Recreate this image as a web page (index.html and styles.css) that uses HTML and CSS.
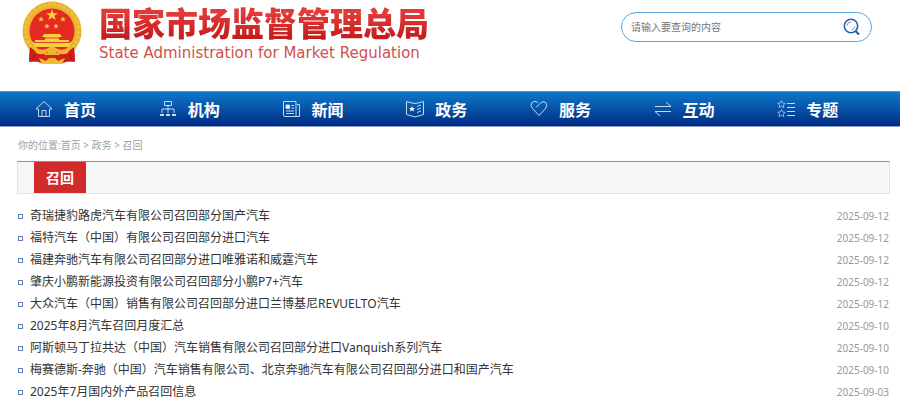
FILE: index.html
```html
<!DOCTYPE html>
<html lang="zh-CN">
<head>
    <meta charset="UTF-8">
    <meta name="viewport" content="width=device-width, initial-scale=1.0">
    <title>召回</title>
    <link rel="stylesheet" href="styles.css">
</head>
<body>

<header class="header">
    <div class="brand">
        <svg class="emblem" viewBox="0 0 60 64" aria-hidden="true">
            <path d="M8 45 L7 61 L16 60 L22 63 H39 L45 60 L53 61 L52 45 Z" fill="#cf1f1b"/>
            <circle cx="30" cy="30" r="29.5" fill="#e9b32c"/>
            <circle cx="30" cy="30" r="26.5" fill="none" stroke="#f0c040" stroke-width="3" stroke-dasharray="3 2"/>
            <circle cx="30" cy="30" r="22.5" fill="#e42a22"/>
            <g fill="#f8cf3c">
                <path d="M30 8 L31.500 12.200 H36 L32.400 14.800 L33.700 19 L30 16.400 L26.300 19 L27.600 14.800 L24 12.200 H28.500 Z"/>
                <path id="star" d="M19 15.500 L19.800 17.300 L21.800 17.400 L20.200 18.600 L20.800 20.500 L19 19.400 L17.200 20.500 L17.800 18.600 L16.200 17.400 L18.200 17.300 Z"/>
                <use href="#star" x="22"/>
                <use href="#star" x="6" y="7"/>
                <use href="#star" x="15" y="7"/>
                <path d="M22 33 H38 L40 36 H37 V39 H47 V41 H50 L47 46 H13 L10 41 H13 V39 H23 V36 H20 Z"/>
            </g>
            <path d="M12 41.500 H48 M22 37 H38" stroke="#d8452a" fill="none"/>
            <path d="M8 46 Q16 53 23 53 L17 61 L7 60 Z M52 46 Q44 53 37 53 L43 61 L53 60 Z" fill="#ce1d1a"/>
            <path d="M11 46 Q21 51 26 47 Q30 44 34 47 Q39 51 49 46 L46 52 Q39 55 35 51 Q30 57 25 51 Q21 55 14 52 Z" fill="#efb62e"/>
            <path d="M20 54 H40 L44 61 L38 63 H22 L16 61 Z" fill="#d3251d"/>
            <path d="M17 57 L24 60 L27 57 H33 L36 60 L43 57 L40 63 H20 Z" fill="#f3bd33"/>
            <path d="M13 53 L10 59 M47 53 L50 59" stroke="#9f1513" fill="none"/>
        </svg>
        <div class="brand-text">
            <h1 class="brand-name">国家市场监督管理总局</h1>
            <p class="brand-en">State Administration for Market Regulation</p>
        </div>
    </div>
    <form class="search" role="search">
        <input class="search-input" type="text" placeholder="请输入要查询的内容" aria-label="请输入要查询的内容">
        <button class="search-btn" type="submit" aria-label="搜索">
            <svg viewBox="0 0 18 18" fill="none" stroke="#2c5da8">
                <circle cx="8" cy="8" r="6.700" stroke-width="1.600"/>
                <path d="M4 8 A4 4 0 0 1 8 4 M8.500 12 A4 4 0 0 0 12 8" stroke-width="1" stroke="#7d9fd0"/>
                <path d="M12.500 13 L16 16.500" stroke-width="2.200"/>
            </svg>
        </button>
    </form>
</header>

<nav class="nav">
    <a class="nav-item" href="#">
        <svg class="nav-icon" viewBox="0 0 18 18"><path d="M1 9 L9 1.500 L17 9 H14.500 V16.500 H3.500 V9 Z M7 16.500 V10.500 H11 V16.500"/></svg>
        首页
    </a>
    <a class="nav-item" href="#">
        <svg class="nav-icon" viewBox="0 0 18 18"><path d="M5.500 1.500 H12.500 V5.500 H5.500 Z M9 5.500 V9 M3 13 V9 H15 V13 M9 9 V13"/><path d="M1 15 H5 M7 15 H11 M13 15 H17" stroke-width="2"/></svg>
        机构
    </a>
    <a class="nav-item" href="#">
        <svg class="nav-icon" viewBox="0 0 18 18"><path d="M1.500 1.500 H14 V16.500 H3 Q1.500 16.500 1.500 15 Z M15 4.500 H17.500 V16.500 H14 M9.500 5.500 H12 M9.500 8 H12 M4 11 H12 M4 13.500 H12"/><path d="M4 5 H7.500 V8.500 H4 Z" fill="#fff"/></svg>
        新闻
    </a>
    <a class="nav-item" href="#">
        <svg class="nav-icon" viewBox="0 0 18 18"><path d="M.5 1.500 L6 3 Q9 4 12 3 L17.500 1.500 V14.500 L9 17 L.5 14.500 Z M11 6.500 L15 5 M11 9.500 L15 8 M11 12.500 L15 11"/><path d="M6 6 L6.800 8 L9 8.200 L7.400 9.500 L8 11.500 L6 10.300 L4 11.500 L4.600 9.500 L3 8.200 L5.200 8 Z" fill="#fff" stroke="none"/></svg>
        政务
    </a>
    <a class="nav-item" href="#">
        <svg class="nav-icon" viewBox="0 0 18 18"><path d="M6 7.500 L10.500 3 Q13 .5 15.500 2.500 Q18 5.500 15.500 8.500 L9 15.500 L2.500 8.500 Q-.5 5 2 2.500 Q5 0 8 2.500"/></svg>
        服务
    </a>
    <a class="nav-item" href="#">
        <svg class="nav-icon" viewBox="0 0 18 18"><path d="M1 6.500 H17 L12 2 M17 11.500 H1 L6 16"/></svg>
        互动
    </a>
    <a class="nav-item" href="#">
        <svg class="nav-icon" viewBox="0 0 18 18"><path d="M4.500 .5 L5.600 3 L8.300 3.300 L6.300 5 L6.900 7.700 L4.500 6.300 L2.100 7.700 L2.700 5 L.7 3.300 L3.400 3 Z M4.500 9.500 L5.600 12 L8.300 12.300 L6.300 14 L6.900 16.700 L4.500 15.300 L2.100 16.700 L2.700 14 L.7 12.300 L3.400 12 Z" opacity=".7"/><path d="M10 3.500 H18 M10 7.500 H18 M10 11.500 H18 M10 15.500 H18"/></svg>
        专题
    </a>
</nav>

<main class="container">
    <div class="breadcrumb">你的位置:<a href="#">首页</a> &gt; <a href="#">政务</a> &gt; <a href="#">召回</a></div>

    <div class="title-bar">
        <h2 class="title-tab">召回</h2>
    </div>

    <ul class="news-list">
        <li><a href="#">奇瑞捷豹路虎汽车有限公司召回部分国产汽车</a><span class="date">2025-09-12</span></li>
        <li><a href="#">福特汽车（中国）有限公司召回部分进口汽车</a><span class="date">2025-09-12</span></li>
        <li><a href="#">福建奔驰汽车有限公司召回部分进口唯雅诺和威霆汽车</a><span class="date">2025-09-12</span></li>
        <li><a href="#">肇庆小鹏新能源投资有限公司召回部分小鹏P7+汽车</a><span class="date">2025-09-12</span></li>
        <li><a href="#">大众汽车（中国）销售有限公司召回部分进口兰博基尼REVUELTO汽车</a><span class="date">2025-09-12</span></li>
        <li><a href="#">2025年8月汽车召回月度汇总</a><span class="date">2025-09-10</span></li>
        <li><a href="#">阿斯顿马丁拉共达（中国）汽车销售有限公司召回部分进口Vanquish系列汽车</a><span class="date">2025-09-10</span></li>
        <li><a href="#">梅赛德斯-奔驰（中国）汽车销售有限公司、北京奔驰汽车有限公司召回部分进口和国产汽车</a><span class="date">2025-09-10</span></li>
        <li><a href="#">2025年7月国内外产品召回信息</a><span class="date">2025-09-03</span></li>
    </ul>
</main>

</body>
</html>
```
FILE: styles.css
```css
*,
*::before {
    box-sizing: border-box;
}

body {
    margin: 0;
    background-color: #fff;
    color: #333;
    font-family: "Noto Sans", "Noto Sans CJK SC", sans-serif;
    font-size: 12px;
}

a {
    color: inherit;
    text-decoration: none;
}

a:hover {
    text-decoration: underline;
}

/* header */
.header {
    display: flex;
    justify-content: space-between;
    align-items: flex-start;
    padding: 1px 28px 26px 22px;
}

.brand {
    display: flex;
    gap: 17px;
}

.emblem {
    width: 60px;
    height: 64px;
}

.brand-text {
    padding-top: 5px;
}

.brand-name {
    margin: 0;
    font-family: "Liberation Sans", "Noto Sans CJK SC", sans-serif;
    font-size: 33px;
    font-weight: 900;
    line-height: 38px;
    background: linear-gradient(#e23a38 20%, #c41c1c 85%);
    -webkit-background-clip: text;
    background-clip: text;
    color: transparent;
}

.brand-en {
    margin: 0;
    font-family: "DejaVu Sans", sans-serif;
    font-size: 15px;
    line-height: 18px;
    color: #d0504c;
}

.search {
    display: flex;
    align-items: center;
    width: 251px;
    height: 30px;
    margin-top: 11px;
    padding: 0 10px 0 9px;
    border: 1px solid #5ba7df;
    border-radius: 15px;
}

.search-input {
    flex: 1;
    min-width: 0;
    padding: 0;
    border: none;
    outline: none;
    background: none;
    font-family: inherit;
    font-size: 10px;
}

.search-input::placeholder {
    color: #757575;
}

.search-btn {
    width: 18px;
    height: 18px;
    padding: 0;
    border: none;
    background: none;
    cursor: pointer;
}

.search-btn svg {
    display: block;
}

/* main navigation */
.nav {
    display: flex;
    height: 36px;
    padding: 0 17px;
    border-top: 1px solid #4a9ad4;
    border-bottom: 1px solid #8fa3cd;
    background: linear-gradient(#0f78c8, #00318a 92%, #002478);
}

.nav-item {
    flex: 1;
    display: flex;
    align-items: center;
    gap: 11px;
    padding-left: 18px;
    color: #fff;
    font-size: 16px;
    font-weight: bold;
}

.nav-icon {
    width: 18px;
    height: 18px;
    fill: none;
    stroke: #c3daf0;
    stroke-width: 1;
}

/* content */
.container {
    padding: 0 10px 0 17px;
}

.breadcrumb {
    padding: 10px 1px 8px;
    font-size: 10px;
    line-height: 16px;
    color: #999fa8;
}

.title-bar {
    display: flex;
    height: 33px;
    padding-left: 16px;
    border: 1px solid #e4e4e4;
    border-top-color: #e46a6a;
    background-color: #f6f6f6;
}

.title-tab {
    margin: 0;
    padding: 0 12px;
    background-color: #d22b2b;
    color: #fff;
    font-size: 14px;
    line-height: 32px;
}

.news-list {
    margin: 0;
    padding: 11px 1px;
    list-style: none;
}

.news-list li {
    display: flex;
    align-items: center;
    line-height: 22px;
}

.news-list li::before {
    content: "";
    width: 5px;
    height: 5px;
    margin-right: 7px;
    border: 1px solid #5f7db8;
}

.date {
    margin-left: auto;
    font-size: 10px;
    color: #999;
}
```
